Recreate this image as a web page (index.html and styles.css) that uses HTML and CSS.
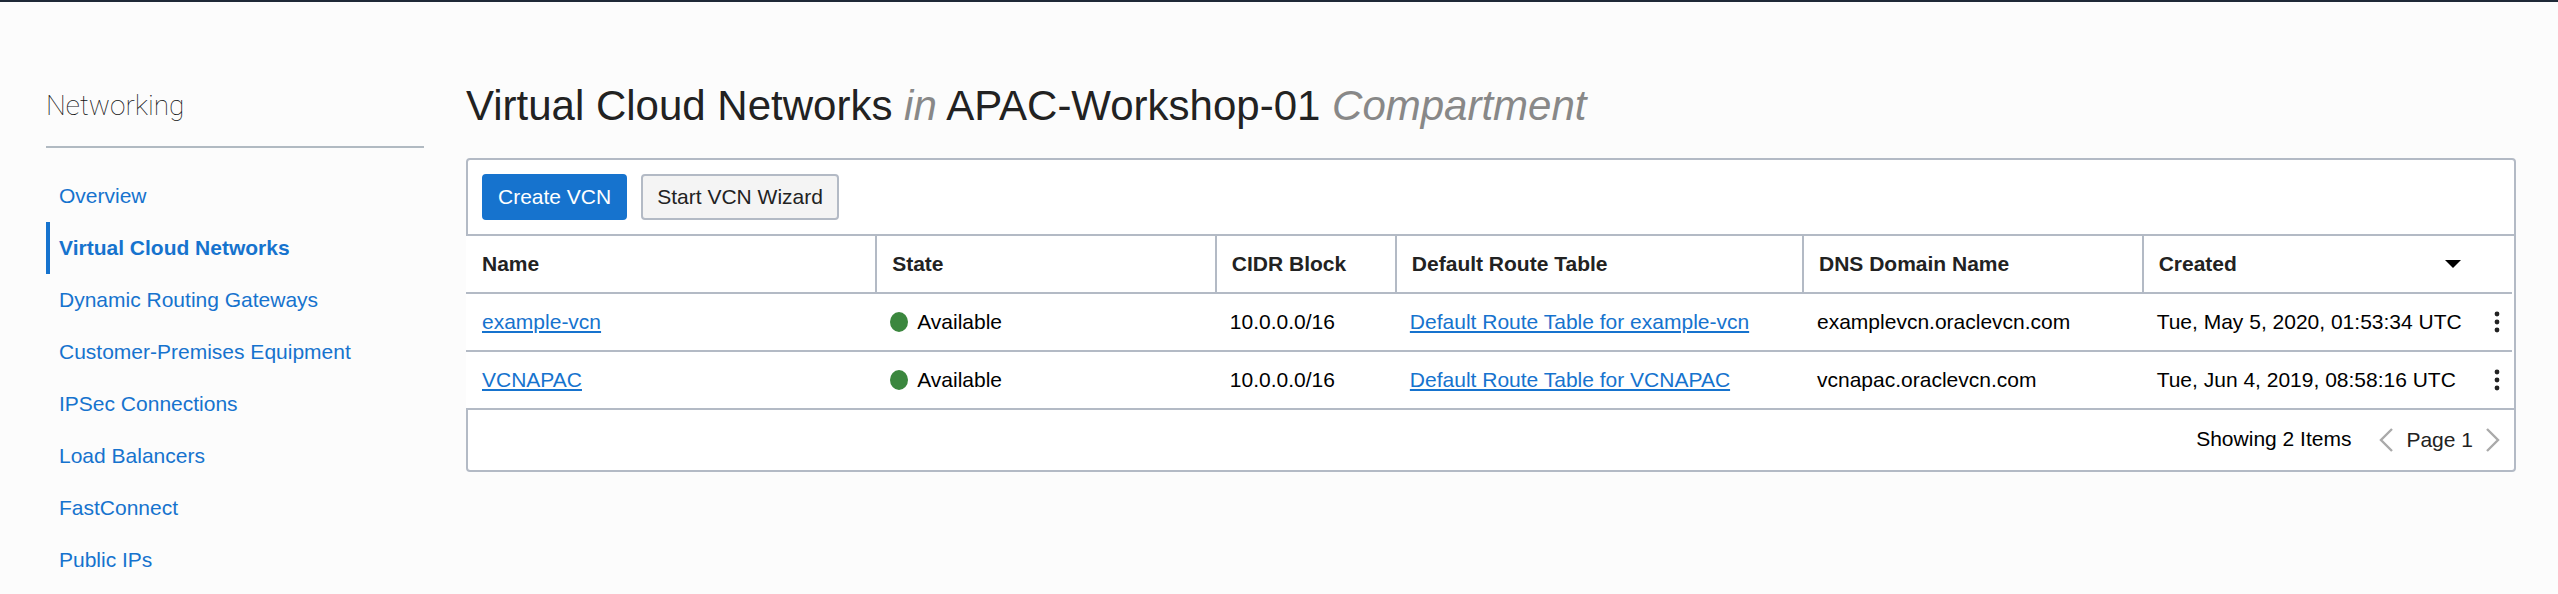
FILE: index.html
```html
<!DOCTYPE html>
<html lang="en">
<head>
<meta charset="utf-8">
<title>Virtual Cloud Networks</title>
<link rel="stylesheet" href="styles.css">
</head>
<body>
<div class="page">
  <aside class="sidebar">
    <h2 class="sidebar-title">Networking</h2>
    <nav aria-label="Networking">
      <ul class="nav-list">
        <li><a class="nav-link" href="#">Overview</a></li>
        <li><a class="nav-link active" href="#" aria-current="page">Virtual Cloud Networks</a></li>
        <li><a class="nav-link" href="#">Dynamic Routing Gateways</a></li>
        <li><a class="nav-link" href="#">Customer-Premises Equipment</a></li>
        <li><a class="nav-link" href="#">IPSec Connections</a></li>
        <li><a class="nav-link" href="#">Load Balancers</a></li>
        <li><a class="nav-link" href="#">FastConnect</a></li>
        <li><a class="nav-link" href="#">Public IPs</a></li>
      </ul>
    </nav>
  </aside>
  <main class="content">
    <h1 class="title">Virtual Cloud Networks <em>in</em> APAC-Workshop-01 <em>Compartment</em></h1>
    <div class="toolbar">
      <button class="btn primary" type="button">Create VCN</button>
      <button class="btn" type="button">Start VCN Wizard</button>
    </div>
    <div class="table-wrap">
      <table class="table">
        <colgroup>
          <col class="col-name"><col class="col-mid"><col class="col-small"><col class="col-route"><col class="col-mid"><col>
        </colgroup>
        <thead>
          <tr>
            <th scope="col">Name</th>
            <th scope="col">State</th>
            <th scope="col">CIDR Block</th>
            <th scope="col">Default Route Table</th>
            <th scope="col">DNS Domain Name</th>
            <th scope="col" aria-sort="descending">
              <div class="sort-cell">Created
                <button class="icon-btn" type="button" aria-label="Sort by created"><svg width="16" height="8" viewBox="0 0 16 8"><path d="M0 0h16L8 8z" fill="#000"/></svg></button>
              </div>
            </th>
          </tr>
        </thead>
        <tbody>
          <tr>
            <td><a class="link" href="#">example-vcn</a></td>
            <td><div class="state"><span class="dot"></span>Available</div></td>
            <td>10.0.0.0/16</td>
            <td><a class="link" href="#">Default Route Table for example-vcn</a></td>
            <td>examplevcn.oraclevcn.com</td>
            <td>
              <div class="created-cell">Tue, May 5, 2020, 01:53:34 UTC
                <button class="icon-btn" type="button" aria-label="Actions for example-vcn"><svg width="6" height="22" viewBox="0 0 6 22"><g fill="#222"><circle cx="3" cy="3" r="2.4"/><circle cx="3" cy="11" r="2.4"/><circle cx="3" cy="19" r="2.4"/></g></svg></button>
              </div>
            </td>
          </tr>
          <tr>
            <td><a class="link" href="#">VCNAPAC</a></td>
            <td><div class="state"><span class="dot"></span>Available</div></td>
            <td>10.0.0.0/16</td>
            <td><a class="link" href="#">Default Route Table for VCNAPAC</a></td>
            <td>vcnapac.oraclevcn.com</td>
            <td>
              <div class="created-cell">Tue, Jun 4, 2019, 08:58:16 UTC
                <button class="icon-btn" type="button" aria-label="Actions for VCNAPAC"><svg width="6" height="22" viewBox="0 0 6 22"><g fill="#222"><circle cx="3" cy="3" r="2.4"/><circle cx="3" cy="11" r="2.4"/><circle cx="3" cy="19" r="2.4"/></g></svg></button>
              </div>
            </td>
          </tr>
        </tbody>
      </table>
    </div>
    <div class="footer">
      <span class="count">Showing 2 Items</span>
      <div class="pager">
        <button class="icon-btn" type="button" aria-label="Previous page"><svg width="14" height="24" viewBox="0 0 14 24"><path d="M13 1L2 12l11 11" fill="none" stroke="#aaa" stroke-width="2.4"/></svg></button>
        <span>Page 1</span>
        <button class="icon-btn" type="button" aria-label="Next page"><svg width="14" height="24" viewBox="0 0 14 24"><path d="M1 1l11 11L1 23" fill="none" stroke="#aaa" stroke-width="2.4"/></svg></button>
      </div>
    </div>
  </main>
</div>
</body>
</html>
```
FILE: styles.css
```css
* { box-sizing: border-box; }

body {
  margin: 0;
  border-top: 2px solid #1f2937;
  background: #fcfcfc;
  color: #000;
  font: 21px/24px "Liberation Sans", Arial, sans-serif;
}

.page {
  display: flex;
  gap: 42px;
  padding: 76px 42px 0 46px;
}

.sidebar { flex: 0 0 378px; }

.sidebar-title {
  margin: 0 0 22px;
  padding: 8px 0 20px;
  border-bottom: 2px solid #b1bac2;
  color: #111;
  font: 100 28px/40px Roboto, "Liberation Sans", sans-serif;
}

.nav-list {
  margin: 0;
  padding: 0;
  list-style: none;
}

.nav-link {
  display: block;
  padding: 14px 9px;
  border-left: 4px solid transparent;
  color: #1673ce;
  text-decoration: none;
}

.nav-link.active {
  border-left-color: #1673ce;
  font-weight: bold;
}

.content {
  flex: 1;
  min-width: 0;
}

.title {
  margin: 0;
  padding: 2px 0 26px;
  color: #222;
  font-size: 42px;
  font-weight: normal;
  line-height: 52px;
}

.title em { color: #888; }

.toolbar {
  display: flex;
  gap: 14px;
  padding: 14px;
  border: 2px solid #b3bac5;
  border-radius: 4px 4px 0 0;
  background: #fff;
}

.btn {
  height: 46px;
  padding: 0 14px;
  border: 2px solid #b3bac5;
  border-radius: 4px;
  background: #f4f4f4;
  color: #222;
  font: inherit;
}

.btn.primary {
  border-color: #1673ce;
  background: #1673ce;
  color: #fff;
}

.table-wrap {
  padding-right: 2px;
  border-right: 2px solid #b3bac5;
  background: #fff;
}

.table {
  width: 100%;
  border-spacing: 0;
  table-layout: fixed;
}

.col-name { width: 20%; }
.col-route { width: 19.9%; }
.col-mid { width: 16.6%; }
.col-small { width: 8.8%; }

.table th,
.table td {
  height: 58px;
  padding: 0 16px;
  border-bottom: 2px solid #b3bac5;
  text-align: left;
  white-space: nowrap;
}

.table th { color: #222; }
.table th + th { border-left: 2px solid #b3bac5; }

.table th + th,
.table td + td { padding-left: 15px; }

.table tbody tr:last-child td {
  height: 56px;
  border-bottom: 0;
}

.sort-cell,
.created-cell {
  display: flex;
  align-items: center;
  justify-content: space-between;
}

.sort-cell { padding-right: 35px; }
.created-cell { margin-right: -4px; }

.link {
  color: #1673ce;
  text-decoration: underline;
  text-decoration-thickness: 2px;
  text-underline-offset: 2px;
}

.state {
  display: flex;
  align-items: center;
  gap: 9px;
}

.dot {
  width: 18px;
  height: 20px;
  border-radius: 50%;
  background: #3b873e;
}

.icon-btn {
  display: flex;
  padding: 0;
  border: 0;
  background: none;
}

.footer {
  display: flex;
  align-items: center;
  justify-content: flex-end;
  gap: 28px;
  height: 64px;
  padding: 0 14px;
  border: 2px solid #b3bac5;
  border-radius: 0 0 4px 4px;
  background: #fff;
}

.count { padding-bottom: 2px; }

.pager {
  display: flex;
  align-items: center;
  gap: 13px;
  color: #222;
}
```
